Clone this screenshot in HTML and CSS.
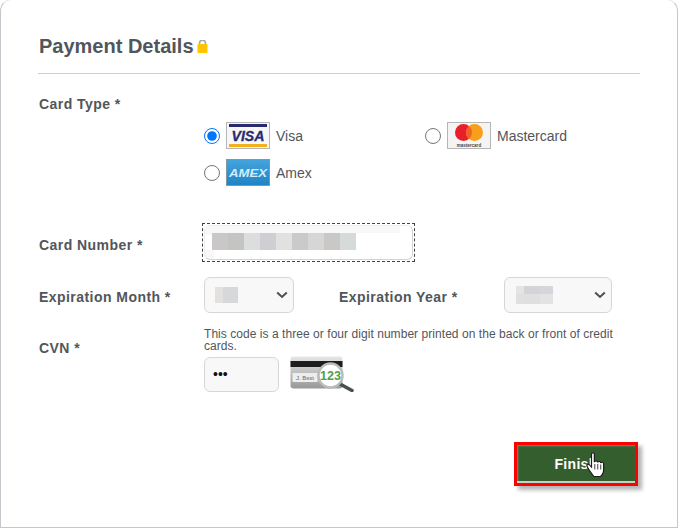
FILE: index.html
```html
<!DOCTYPE html>
<html lang="en">
<head>
    <meta charset="UTF-8">
    <title>Payment Details</title>
    <link rel="stylesheet" href="styles.css">
</head>
<body>
    <div class="card">
        <h2 class="title">Payment Details
            <svg class="lock" width="11" height="13" viewBox="0 0 11 13">
                <path d="M2.5 5V3.2a3 3 0 0 1 6 0V5" fill="none" stroke="#a9a9a9" stroke-width="1.6"/>
                <rect x="0.5" y="4" width="10" height="9" rx="1" fill="#ffc400"/>
            </svg>
        </h2>

        <div class="row-type">
            <div class="label">Card Type *</div>
            <div class="options">
                <label class="option">
                    <input type="radio" name="cardType" checked>
                    <svg class="brand" width="44" height="27" viewBox="0 0 44 27">
                        <rect x="0.5" y="0.5" width="43" height="26" fill="#f7f7f7" stroke="#b5b5b5"/>
                        <rect x="3" y="2" width="38" height="3" fill="#272a6e"/>
                        <rect x="3" y="22" width="38" height="3" fill="#f2b01e"/>
                        <text x="22" y="19" class="visa-text" text-anchor="middle" textLength="33" lengthAdjust="spacingAndGlyphs">VISA</text>
                    </svg>
                    <span>Visa</span>
                </label>
                <label class="option">
                    <input type="radio" name="cardType">
                    <svg class="brand" width="44" height="27" viewBox="0 0 44 27">
                        <rect x="0.5" y="0.5" width="43" height="26" fill="#f4f4f4" stroke="#b5b5b5"/>
                        <circle cx="16.5" cy="10.5" r="8.5" fill="#e8202a"/>
                        <circle cx="27.5" cy="10.5" r="8.5" fill="#f79e1b"/>
                        <path d="M22 4a8.5 8.5 0 0 1 0 13a8.5 8.5 0 0 1 0-13z" fill="#f0622a"/>
                        <text x="22" y="24.5" class="mc-text" text-anchor="middle">mastercard</text>
                    </svg>
                    <span>Mastercard</span>
                </label>
                <label class="option">
                    <input type="radio" name="cardType">
                    <svg class="brand" width="44" height="27" viewBox="0 0 44 27">
                        <defs>
                            <linearGradient id="amexBg" x1="0" y1="0" x2="0" y2="1">
                                <stop offset="0" stop-color="#45a4dc"/>
                                <stop offset="1" stop-color="#1f83c4"/>
                            </linearGradient>
                        </defs>
                        <rect x="0.5" y="0.5" width="43" height="26" fill="url(#amexBg)" stroke="#7d98ab"/>
                        <text x="22" y="17.5" class="amex-text" text-anchor="middle" textLength="38" lengthAdjust="spacingAndGlyphs">AMEX</text>
                    </svg>
                    <span>Amex</span>
                </label>
            </div>
        </div>

        <div class="row-number">
            <div class="label">Card Number *</div>
            <div class="number-focus">
                <div class="number-input">
                    <div class="blur blur-number"></div>
                </div>
            </div>
        </div>

        <div class="row-expiry">
            <div class="label">Expiration Month *</div>
            <div class="select select-month">
                <div class="blur blur-month"></div>
                <svg class="chevron" width="12" height="8" viewBox="0 0 12 8"><path d="M1.2 1.5 6 6l4.8-4.5" fill="none" stroke="#4b4f54" stroke-width="2"/></svg>
            </div>
            <div class="label label-year">Expiration Year *</div>
            <div class="select select-year">
                <div class="blur blur-year"></div>
                <svg class="chevron" width="12" height="8" viewBox="0 0 12 8"><path d="M1.2 1.5 6 6l4.8-4.5" fill="none" stroke="#4b4f54" stroke-width="2"/></svg>
            </div>
        </div>

        <div class="row-cvn">
            <div class="label">CVN *</div>
            <div class="cvn-body">
                <p class="hint">This code is a three or four digit number printed on the back or front of credit cards.</p>
                <div class="cvn-entry">
                    <div class="cvn-input">•••</div>
                    <svg class="cvn-icon" width="66" height="36" viewBox="0 0 66 36">
                        <defs>
                            <linearGradient id="cardBg" x1="0" y1="0" x2="0" y2="1">
                                <stop offset="0" stop-color="#e6e6e6"/>
                                <stop offset="1" stop-color="#989898"/>
                            </linearGradient>
                        </defs>
                        <rect x="0.5" y="0.5" width="52" height="32" rx="3" fill="url(#cardBg)"/>
                        <rect x="0.5" y="5" width="52" height="6" fill="#1d1d1d"/>
                        <rect x="2.5" y="17" width="25" height="9" fill="#eeeeee"/>
                        <text x="15" y="24" class="cvn-sig" text-anchor="middle">J. Bsst</text>
                        <path d="M50 28l12 6.5" stroke="#4a4f52" stroke-width="3.5" stroke-linecap="round"/>
                        <circle cx="40.5" cy="19.5" r="12" fill="#fff" stroke="#b9bdb9" stroke-width="2.5"/>
                        <text x="40.5" y="24" class="cvn-num" text-anchor="middle">123</text>
                    </svg>
                </div>
            </div>
        </div>

        <div class="actions">
            <button class="finish">Finish</button>
            <svg class="cursor" width="22" height="26" viewBox="0 0 20 26" preserveAspectRatio="none">
                <path d="M5 1.8c0-1.3 2.6-1.3 2.6 0v8.4c.3-1.6 3-1.6 3 .2.3-1.3 2.8-1.2 2.8.5.5-1 2.6-.8 2.6.9v6.4c0 2.6-1.7 5.5-3 6.3H7.2c-1.4-1.6-3-4.5-4.6-7L1 14.4c-.8-1.6 1-2.7 2.2-1.4L5 15z" fill="#fff" stroke="#1c1c1c" stroke-width="1.1"/>
                <path d="M8 12v5.5M10.7 12v5.5M13.4 12.5v5" stroke="#1c1c1c" stroke-width=".8"/>
            </svg>
        </div>
    </div>
</body>
</html>
```

FILE: styles.css
```css
* {
    box-sizing: border-box;
}
html, body {
    height: 100%;
}
body {
    margin: 0;
    background: white;
    font-family: "Liberation Sans", Arial, sans-serif;
    font-size: 14px;
    color: #51565b;
    overflow: hidden;
}
.card {
    width: 678px;
    height: 529px;
    padding: 35px 38px 0 38px;
    background: white;
    border-right: 1px solid #c4c8cc;
    border-bottom: 1px solid #c4c8cc;
    border-left: 1px solid #c4c8cc;
    border-top: 1px solid #e8e8e8;
    border-radius: 12px 12px 0 0;
    margin-top: -1px;
}
.title {
    margin: 0 0 21px -1px;
    padding: 0 0 15px 1px;
    height: 39px;
    width: 602px;
    border-bottom: 1px solid #cfcfcf;
    font-size: 20px;
    line-height: 23px;
    font-weight: bold;
}
.lock {
    margin-left: -2px;
    vertical-align: 0;
}
.label {
    font-size: 14px;
    font-weight: bold;
    line-height: 18px;
    letter-spacing: 0.45px;
}
.row-type {
    display: grid;
    grid-template-columns: 165px 1fr;
}
.options {
    display: grid;
    grid-template-columns: 221px 160px;
    row-gap: 10px;
    padding-top: 9px;
    grid-column: 2;
}
.row-type .label {
    grid-column: 1 / 3;
}
.option {
    display: flex;
    align-items: center;
    height: 27px;
    gap: 6px;
}
.option input {
    width: 16px;
    height: 16px;
    margin: 0;
    accent-color: #0075ff;
}
.brand {
    display: block;
}
.visa-text {
    font: italic bold 14px "Liberation Sans", sans-serif;
    fill: #272a6e;
    stroke: #272a6e;
    stroke-width: 0.3px;
}
.mc-text {
    font: bold 4.5px "Liberation Sans", sans-serif;
    fill: #444444;
}
.amex-text {
    font: italic bold 11px "Liberation Sans", sans-serif;
    fill: #d3ecfa;
}
.row-number {
    display: flex;
    align-items: center;
    margin-top: 37px;
}
.row-number .label {
    width: 163px;
    padding-top: 5px;
}
.number-focus {
    width: 213px;
    height: 39px;
    border: 1px dashed #444444;
    padding: 1px;
}
.number-input {
    height: 100%;
    background: linear-gradient(90deg, #f8f8f8 9px, white 9px);
    border: 1px solid;
    border-color: #eeeeee #d4d4d4 #d4d4d4 #eeeeee;
    border-radius: 6px;
}
.blur {
    background-repeat: no-repeat;
}
.blur-number {
    width: 195px;
    height: 24px;
    background:
        linear-gradient(90deg, #c9c7c7 0 16px, #c4c4c2 16px 32px, #dcdddf 32px 48px, #d0ced3 48px 64px, #e0e2df 64px 80px, #cacacc 80px 96px, #d6d6d4 96px 112px, #cac8c6 112px 128px, #d5dbdb 128px 144px, #ffffff 144px) 7px 7px / 188px 17px no-repeat,
        linear-gradient(#f8f8f8 9px, white 9px);
}
.row-expiry {
    display: flex;
    align-items: center;
    margin-top: 15px;
}
.row-expiry > .label:first-child {
    width: 165px;
}
.label-year {
    width: 165px;
    margin-left: 45px;
}
.row-expiry .label {
    padding-top: 4px;
}
.select {
    display: flex;
    align-items: center;
    justify-content: space-between;
    height: 36px;
    padding: 0 5px 0 10px;
    background: #f8f8f8;
    border: 1px solid #d6d6d6;
    border-radius: 6px;
}
.select-month {
    width: 90px;
}
.select-year {
    width: 108px;
    padding-left: 11px;
}
.blur-month {
    width: 23px;
    height: 16px;
    background: linear-gradient(90deg, #e2e1e0 8px, #d6d8da 8px);
}
.blur-year {
    width: 37px;
    height: 18px;
    background:
        linear-gradient(90deg, #e6e3e3 8px, #d3d3d8 8px 24px, #d6d6da 24px) top / 100% 8px no-repeat,
        linear-gradient(90deg, #e0e0e0 8px, #dfdfdf 8px 24px, #e3e3e3 24px) bottom / 100% 10px no-repeat;
}
.row-cvn {
    display: flex;
    margin-top: 15px;
}
.row-cvn .label {
    width: 165px;
    padding-top: 11px;
}
.cvn-body {
    flex: 1;
}
.hint {
    margin: 0 0 4px 0;
    width: 432px;
    font-size: 12px;
    line-height: 12px;
    letter-spacing: 0.05px;
}
.cvn-entry {
    display: flex;
    align-items: center;
    gap: 11px;
}
.cvn-input {
    width: 75px;
    height: 35px;
    padding-left: 8px;
    background: #f8f8f8;
    border: 1px solid #d6d6d6;
    border-radius: 6px;
    color: #111111;
    font-size: 14px;
    line-height: 33px;
}
.cvn-sig {
    font: 6px "Liberation Sans", sans-serif;
    fill: #666666;
}
.cvn-num {
    font: bold 12.5px "Liberation Sans", sans-serif;
    fill: #4ea04a;
}
.actions {
    position: relative;
    display: flex;
    justify-content: flex-end;
    width: 599px;
    margin-top: 50px;
}
.finish {
    width: 124px;
    height: 44px;
    background: #355e2f;
    border: 3px solid #ff0000;
    color: white;
    font-family: "Liberation Sans", Arial, sans-serif;
    font-size: 14px;
    font-weight: bold;
    letter-spacing: 0.3px;
    box-shadow: 4px 4px 4px rgba(0,0,0,0.3), inset 1px 1px 2px rgba(255,255,255,0.3), inset 0 -2px 0 #c9cfc8;
}
.cursor {
    position: absolute;
    left: 547px;
    top: 10px;
}
```
